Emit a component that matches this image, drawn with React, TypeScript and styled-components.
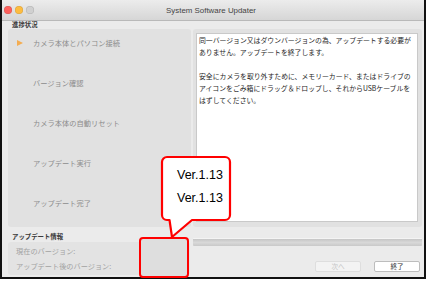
import React from "react";
import styled, { createGlobalStyle } from "styled-components";

const GlobalStyle = createGlobalStyle`
  html, body {
    margin: 0;
    padding: 0;
    background: #ffffff;
  }
  body {
    font-family: "Noto Sans CJK JP", "Liberation Sans", sans-serif;
  }
`;

const Page = styled.div`
  position: relative;
  width: 427px;
  height: 282px;
  overflow: hidden;
`;

const Frame = styled.div`
  width: 426px;
  height: 279px;
  box-sizing: border-box;
  border: 2px solid #111;
  border-top: none;
  background: #ebebeb;
  display: flex;
  flex-direction: column;
`;

const TitleBar = styled.div`
  position: relative;
  height: 21px;
  flex: none;
  box-sizing: border-box;
  border-bottom: 1px solid #b9b9b9;
  background: linear-gradient(#ececec, #d6d6d6);
  display: flex;
  align-items: center;
  justify-content: center;
`;

const Lights = styled.div`
  position: absolute;
  left: 2px;
  top: 6px;
  display: flex;
  gap: 3px;
`;

const Light = styled.span<{ $color: string }>`
  width: 8px;
  height: 8px;
  border-radius: 50%;
  background: ${(p) => p.$color};
  box-shadow: inset 0 0 0 0.5px rgba(0, 0, 0, 0.15);
`;

const Title = styled.div`
  font-family: "Liberation Sans", Arial, sans-serif;
  font-size: 7.9px;
  color: #444;
  margin-left: -4px;
`;

const Body = styled.div`
  flex: 1;
  display: flex;
  flex-direction: column;
  padding: 0 2px 0 6px;
`;

const SectionLabel = styled.div`
  font-size: 6.4px;
  font-weight: 700;
  color: #3a3a3a;
  line-height: 8px;
  padding-left: 4px;
  white-space: nowrap;
`;

const MainRow = styled.div`
  display: flex;
  gap: 2px;
  height: 198px;
`;

const StepPanel = styled.div`
  width: 183px;
  flex: none;
  background: #e1e1e1;
  border-radius: 3px;
  box-sizing: border-box;
  padding: 9px 0 0 9px;
  display: flex;
  flex-direction: column;
  gap: 31.2px;
`;

const Step = styled.div`
  display: flex;
  align-items: center;
  height: 9px;
  font-size: 7.25px;
  color: #8c8c8c;
  white-space: nowrap;
`;

const ArrowSlot = styled.span`
  width: 16px;
  flex: none;
  display: flex;
  align-items: center;
`;

const Arrow = styled.span`
  width: 0;
  height: 0;
  border-top: 3.5px solid transparent;
  border-bottom: 3.5px solid transparent;
  border-left: 6px solid #f4ad52;
`;

const MessageFrame = styled.div`
  flex: 1;
  background: #e1e1e1;
  border-radius: 3px;
  padding: 4px 4px 5px 3px;
  display: flex;
`;

const MessageBox = styled.div`
  flex: 1;
  background: #ffffff;
  border: 1px solid #c9c9c9;
  box-sizing: border-box;
  padding: 0 2px;
  font-size: 6.85px;
  line-height: 12px;
  color: #1e1e1e;
  white-space: nowrap;
`;

const Paragraph = styled.p`
  margin: 0 0 12px;
`;

const LowerRow = styled.div`
  flex: 1;
  display: flex;
  gap: 3px;
`;

const InfoColumn = styled.div`
  width: 182px;
  flex: none;
  display: flex;
  flex-direction: column;
  padding-top: 6px;
  padding-bottom: 2px;
`;

const InfoPanel = styled.div`
  flex: 1;
  margin-top: 1px;
  background: #e3e3e3;
  border-radius: 3px;
  padding: 5px 0 0 8px;
  display: flex;
  flex-direction: column;
  gap: 6px;
`;

const InfoLine = styled.div`
  font-size: 7.2px;
  line-height: 9px;
  color: #a2a2a2;
  white-space: nowrap;
`;

const ActionColumn = styled.div`
  flex: 1;
  display: flex;
  flex-direction: column;
  padding: 11px 0 0 0;
`;

const ProgressTrack = styled.div`
  height: 7px;
  border-top: 1px solid #f4f4f4;
  background: linear-gradient(#c6c6c6, #d8d8d8 50%, #c9c9c9);
  border-radius: 1px;
`;

const ButtonRow = styled.div`
  display: flex;
  justify-content: flex-end;
  gap: 13px;
  margin-top: 15px;
  padding-right: 2px;
`;

const Button = styled.div<{ $disabled?: boolean }>`
  width: 46px;
  height: 11px;
  box-sizing: border-box;
  border-radius: 2px;
  border: 1px solid ${(p) => (p.$disabled ? "#dedede" : "#bdbdbd")};
  background: ${(p) => (p.$disabled ? "#f3f3f3" : "#ffffff")};
  color: ${(p) => (p.$disabled ? "#c4c4c4" : "#333333")};
  font-size: 6.6px;
  line-height: 9px;
  text-align: center;
`;

const Bubble = styled.svg`
  position: absolute;
  left: 160px;
  top: 155px;
  width: 75px;
  height: 86px;
  overflow: visible;
`;

const BubbleText = styled.div`
  position: absolute;
  left: 177px;
  top: 166px;
  display: flex;
  flex-direction: column;
  gap: 5px;
  font-family: "Liberation Sans", Arial, sans-serif;
  font-size: 12.5px;
  line-height: 18px;
  color: #000;
`;

const MarkedBox = styled.div`
  position: absolute;
  left: 139px;
  top: 237px;
  width: 50px;
  height: 41px;
  box-sizing: border-box;
  border: 2px solid #ff0000;
  border-radius: 4px;
  background: #dedede;
`;

const steps = [
  "カメラ本体とパソコン接続",
  "バージョン確認",
  "カメラ本体の自動リセット",
  "アップデート実行",
  "アップデート完了",
];

export default function App() {
  return (
    <Page>
      <GlobalStyle />
      <Frame>
        <TitleBar>
          <Lights>
            <Light $color="#fc605c" />
            <Light $color="#fdbc40" />
            <Light $color="#d0d0d0" />
          </Lights>
          <Title>System Software Updater</Title>
        </TitleBar>
        <Body>
          <SectionLabel>進捗状況</SectionLabel>
          <MainRow>
            <StepPanel>
              {steps.map((s, i) => (
                <Step key={s}>
                  <ArrowSlot>{i === 0 && <Arrow />}</ArrowSlot>
                  {s}
                </Step>
              ))}
            </StepPanel>
            <MessageFrame>
              <MessageBox>
                <Paragraph>
                  同一バージョン又はダウンバージョンの為、アップデートする必要が
                  <br />
                  ありません。アップデートを終了します。
                </Paragraph>
                <Paragraph>
                  安全にカメラを取り外すために、メモリーカード、またはドライブの
                  <br />
                  アイコンをごみ箱にドラッグ＆ドロップし、それからUSBケーブルを
                  <br />
                  はずしてください。
                </Paragraph>
              </MessageBox>
            </MessageFrame>
          </MainRow>
          <LowerRow>
            <InfoColumn>
              <SectionLabel>アップデート情報</SectionLabel>
              <InfoPanel>
                <InfoLine>現在のバージョン:</InfoLine>
                <InfoLine>アップデート後のバージョン:</InfoLine>
              </InfoPanel>
            </InfoColumn>
            <ActionColumn>
              <ProgressTrack />
              <ButtonRow>
                <Button $disabled>次へ</Button>
                <Button>終了</Button>
              </ButtonRow>
            </ActionColumn>
          </LowerRow>
        </Body>
      </Frame>
      <Bubble viewBox="0 0 75 86">
        <path
          d="M 7 2 H 65 A 5 5 0 0 1 70 7 V 60 A 5 5 0 0 1 65 65 H 32 L 12 82 L 9.5 65 H 7 A 5 5 0 0 1 2 60 V 7 A 5 5 0 0 1 7 2 Z"
          fill="#ffffff"
          stroke="#ff0000"
          strokeWidth="2.2"
          strokeLinejoin="round"
        />
      </Bubble>
      <BubbleText>
        <span>Ver.1.13</span>
        <span>Ver.1.13</span>
      </BubbleText>
      <MarkedBox />
    </Page>
  );
}
